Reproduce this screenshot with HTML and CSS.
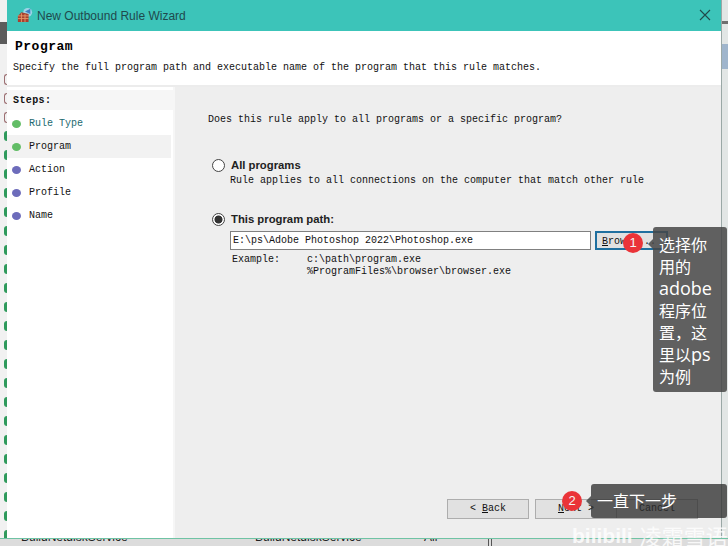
FILE: index.html
```html
<!DOCTYPE html>
<html lang="en">
<head>
    <meta charset="UTF-8">
    <meta name="viewport" content="width=device-width, initial-scale=1.0">
    <title>New Outbound Rule Wizard</title>
    <link rel="stylesheet" href="styles.css">
</head>
<body>
    <div class="screen">
        <div class="top-row">
            <div class="edge-left">
                <div class="edge-dark"></div>
                <div class="edge-dots edge-dots-red">
                    <span></span><span></span><span></span>
                </div>
                <div class="edge-dots edge-dots-green">
                    <span></span><span></span><span></span><span></span><span></span><span></span>
                    <span></span><span></span><span></span><span></span><span></span><span></span>
                    <span></span><span></span><span></span><span></span><span></span><span></span>
                    <span></span><span></span><span></span><span></span>
                </div>
            </div>
            <div class="dialog">
                <header class="titlebar">
                    <svg class="app-icon" width="16" height="16" viewBox="0 0 18 18">
                        <circle cx="12" cy="6" r="5" fill="#9fd4e6"/>
                        <path d="M9 5 L15 2 L15 8 Z" fill="#3f7fc4"/>
                        <path d="M1 17 L1 10 L5 6 L13 8 L13 17 Z" fill="#a8402f"/>
                        <path d="M1 10 H13 M1 13 H13 M5 7 V17 M9 8 V17" stroke="#e59a6a" stroke-width="1"/>
                    </svg>
                    <span class="title-text">New Outbound Rule Wizard</span>
                    <svg class="close-icon" width="12" height="12" viewBox="0 0 12 12">
                        <path d="M1 1 L11 11 M11 1 L1 11" stroke="#21494a" stroke-width="1.1" fill="none"/>
                    </svg>
                </header>
                <section class="page-head">
                    <h1>Program</h1>
                    <p>Specify the full program path and executable name of the program that this rule matches.</p>
                </section>
                <div class="wizard">
                    <aside class="steps">
                        <div class="steps-title">Steps:</div>
                        <div class="step step-first"><i class="dot dot-green"></i><span class="step-link">Rule Type</span></div>
                        <div class="step step-current"><i class="dot dot-green"></i>Program</div>
                        <div class="step"><i class="dot dot-purple"></i>Action</div>
                        <div class="step"><i class="dot dot-purple"></i>Profile</div>
                        <div class="step"><i class="dot dot-purple"></i>Name</div>
                    </aside>
                    <main class="content">
                        <p class="question">Does this rule apply to all programs or a specific program?</p>
                        <div class="option">
                            <i class="radio"></i>
                            <span class="option-label">All programs</span>
                        </div>
                        <p class="option-note">Rule applies to all connections on the computer that match other rule</p>
                        <div class="option option-path">
                            <i class="radio radio-on"></i>
                            <span class="option-label">This program path:</span>
                        </div>
                        <div class="path-row">
                            <div class="path-input">E:\ps\Adobe Photoshop 2022\Photoshop.exe</div>
                            <div class="browse-btn"><span><u>B</u>rowse...</span></div>
                        </div>
                        <div class="example">
                            <span class="example-label">Example:</span>
                            <span>c:\path\program.exe<br>%ProgramFiles%\browser\browser.exe</span>
                        </div>
                        <div class="buttons">
                            <div class="btn">&lt; <u>B</u>ack</div>
                            <div class="btn btn-next"><span><u>N</u>ext &gt;</span></div>
                            <div class="btn btn-cancel">Cancel</div>
                        </div>
                    </main>
                </div>
            </div>
            <div class="edge-right">
                <div class="edge-line"></div>
                <div class="edge-thumb"></div>
            </div>
        </div>
        <div class="bottom-row">
            <span class="service service-a">BuildNetdiskService</span>
            <span class="service service-b">BuildNetdiskService</span>
            <span class="service service-c">All</span>
            <span class="column-tick"></span>
        </div>

        <div class="badge badge-one">1</div>
        <div class="tip tip-one">选择你<br>用的<br><span class="latin">adobe</span><br>程序位<br>置，这<br>里以<span class="latin">ps</span><br>为例</div>
        <div class="badge badge-two">2</div>
        <div class="tip tip-two">一直下一步</div>
        <div class="watermark"><span class="wm-logo">bilibili</span><span class="wm-name">凌霜雪语</span></div>
    </div>
</body>
</html>
```

FILE: styles.css
```css
* {
    box-sizing: border-box;
}
body {
    margin: 0;
    padding: 0;
    background-color: #e4e4e4;
    font-family: "Liberation Mono", "Noto Sans CJK SC", monospace;
    font-size: 10px;
    color: #111;
}
p, h1 {
    margin: 0;
}
.screen {
    position: relative;
    width: 728px;
    height: 546px;
    overflow: hidden;
    display: flex;
    flex-direction: column;
}
.top-row {
    display: flex;
    height: 538px;
    flex-shrink: 0;
}

/* what shows behind the wizard */
.edge-left {
    width: 7px;
    background: #f1f1f1;
    display: flex;
    flex-direction: column;
    overflow: hidden;
}
.edge-dark {
    height: 22px;
    flex-shrink: 0;
    margin-top: 22px;
    background: #5c5c5c;
}
.edge-dots {
    display: flex;
    flex-direction: column;
    flex-shrink: 0;
    align-items: flex-end;
}
.edge-dots span {
    display: block;
    flex-shrink: 0;
    width: 3px;
    height: 10px;
    border-radius: 3px 0 0 3px;
}
.edge-dots-red {
    margin-top: 30px;
    gap: 8px;
}
.edge-dots-red span {
    height: 11px;
    border: 1px solid #9c6f72;
    border-right: 0;
}
.edge-dots-green {
    margin-top: 8px;
    gap: 9px;
}
.edge-dots-green span {
    background: #2f9a5c;
}
.edge-right {
    width: 7px;
    background: #e2e6e5;
    border-left: 1px solid #9aa8a6;
}
.edge-line {
    height: 3px;
    margin-top: 21px;
    background: #6f6f6f;
}
.edge-thumb {
    height: 25px;
    margin-top: 20px;
    background: #9fb5cc;
}
.bottom-row {
    position: relative;
    flex: 1;
    background: #dcdcdc;
    border-top: 1px solid #6fc3a4;
    font-family: "Liberation Sans", sans-serif;
    font-size: 12px;
    line-height: 1;
    overflow: hidden;
}
.service {
    position: absolute;
    top: -8px;
    color: #222;
}
.service-a {
    left: 21px;
}
.service-b {
    left: 255px;
}
.service-c {
    left: 424px;
}
.column-tick {
    position: absolute;
    left: 488px;
    top: 0;
    width: 4px;
    height: 8px;
    border-left: 1px solid #555;
    border-right: 1px solid #555;
}

/* dialog */
.dialog {
    flex: 1;
    display: flex;
    flex-direction: column;
    background: white;
}
.titlebar {
    height: 31px;
    flex-shrink: 0;
    display: flex;
    align-items: center;
    padding: 0 9px 0 10px;
    background: #3cc4b9;
}
.app-icon {
    margin-right: 4px;
    margin-top: -1px;
}
.title-text {
    flex: 1;
    font-family: "Liberation Sans", sans-serif;
    font-size: 12px;
    color: #1f4a4d;
}
.close-icon {
    margin-right: 1px;
    margin-top: -1px;
}
.page-head {
    height: 56px;
    flex-shrink: 0;
    padding: 7px 6px 0;
    border-bottom: 2px solid #ececec;
}
.page-head h1 {
    font-size: 13px;
    line-height: 17px;
    padding-left: 2px;
    font-weight: bold;
    font-family: "Liberation Mono", monospace;
    color: #000;
    letter-spacing: 0.5px;
}
.page-head p {
    margin-top: 7px;
    line-height: 12px;
}
.wizard {
    flex: 1;
    display: flex;
}

/* left steps list */
.steps {
    width: 166px;
    flex-shrink: 0;
}
.steps-title {
    height: 23px;
    padding: 3px 6px 0;
    border-top: 3px solid white;
    line-height: 16px;
    font-weight: bold;
    letter-spacing: 0.4px;
    background: #f6f6f6;
}
.step {
    height: 23px;
    display: flex;
    align-items: center;
    padding-left: 5px;
}
.step-first {
    margin-top: 2px;
}
.step-current {
    background: #f2f2f2;
    margin-right: 2px;
}
.step-link {
    color: #1c6a70;
}
.dot {
    width: 9px;
    height: 8px;
    margin-right: 8px;
    border-radius: 50%;
}
.dot-green {
    background: #62bd66;
}
.dot-purple {
    background: #6d6cbb;
}
.content {
    flex: 1;
    display: flex;
    flex-direction: column;
    padding: 27px 0 0 33px;
    background: #eeeeee;
    border-left: 2px solid #f6f6f6;
}
.question {
    line-height: 12px;
}
.option {
    display: flex;
    align-items: center;
    margin-top: 32px;
    margin-left: 4px;
    height: 14px;
}
.option-path {
    margin-top: 25px;
}
.radio {
    width: 13px;
    height: 13px;
    margin-right: 6px;
    border: 1px solid #444;
    border-radius: 50%;
    background: white;
}
.radio-on {
    background: radial-gradient(circle, #333 0, #333 3.6px, white 4.4px);
}
.option-label {
    font-family: "Liberation Sans", sans-serif;
    font-size: 11.3px;
    font-weight: bold;
    color: #222;
}
.option-note {
    margin-top: 3px;
    margin-left: 22px;
    line-height: 12px;
}
.path-row {
    display: flex;
    margin-top: 5px;
    margin-left: 22px;
    gap: 4px;
}
.path-input {
    width: 361px;
    height: 19px;
    padding: 2px 2px;
    line-height: 14px;
    background: white;
    border: 1px solid #808080;
}
.browse-btn {
    width: 73px;
    height: 19px;
    padding: 2px 5px;
    line-height: 13px;
    background: #e1e1e1;
    border: 2px solid #1f6f9f;
}
.example {
    display: flex;
    margin-top: 4px;
    margin-left: 24px;
    line-height: 12px;
}
.example-label {
    width: 75px;
}
.buttons {
    display: flex;
    gap: 6px;
    margin-top: auto;
    margin-bottom: 19px;
    margin-left: 239px;
}
.btn {
    width: 82px;
    height: 20px;
    text-align: center;
    line-height: 18px;
    background: #e1e1e1;
    border: 1px solid #adadad;
}
.btn-cancel {
    margin-left: -7px;
    color: #000;
}

/* tutorial annotations over the wizard */
.badge {
    position: absolute;
    width: 20px;
    height: 20px;
    border-radius: 50%;
    background: #ea3338;
    color: #f4f4f4;
    font-family: "Liberation Sans", sans-serif;
    font-size: 13px;
    line-height: 20px;
    text-align: center;
}
.badge-one {
    left: 623px;
    top: 233px;
}
.badge-two {
    left: 562px;
    top: 491px;
}
.tip {
    position: absolute;
    background: rgba(70, 70, 70, 0.85);
    color: white;
    border-radius: 3px;
    font-family: "Open Sans", "Noto Sans CJK SC", sans-serif;
    font-size: 16px;
}
.tip::before {
    content: "";
    position: absolute;
    left: -5px;
    top: 12px;
    border-top: 5px solid transparent;
    border-bottom: 5px solid transparent;
    border-right: 5px solid rgba(70, 70, 70, 0.85);
}
.tip .latin {
    font-size: 18px;
    line-height: 1;
}
.tip-one {
    left: 653px;
    top: 227px;
    width: 74px;
    height: 165px;
    padding: 7px 5px 0 6px;
    line-height: 22px;
}
.tip-two {
    left: 591px;
    top: 484px;
    width: 136px;
    height: 34px;
    padding: 6px 6px;
    line-height: 22px;
    background: rgba(50, 50, 50, 0.78);
}
.watermark {
    position: absolute;
    left: 572px;
    top: 522px;
    display: flex;
    align-items: center;
    gap: 7px;
    color: rgba(255, 255, 255, 0.82);
    line-height: 27px;
    white-space: nowrap;
}
.wm-logo {
    font-family: "Liberation Sans", sans-serif;
    font-size: 21px;
    font-weight: bold;
}
.wm-name {
    font-family: "Noto Sans CJK SC", sans-serif;
    font-size: 22px;
}
```
